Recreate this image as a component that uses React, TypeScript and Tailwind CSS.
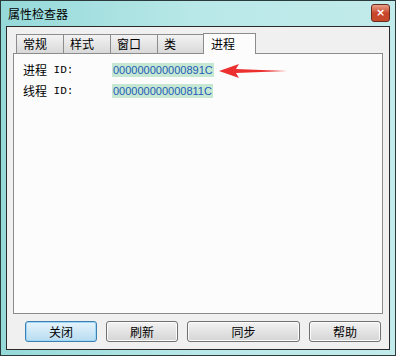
import React from 'react';

const tabs = ['常规', '样式', '窗口', '类'];
const cjk = { fontFamily: '"SimSun", "Noto Sans CJK SC", sans-serif' };
const mono = { fontFamily: '"Liberation Mono", monospace', fontSize: '11px' };
const val = { fontFamily: '"Liberation Sans", Arial, sans-serif', fontSize: '11px' };

function Btn({ label, w, focused }: { label: string; w: string; focused?: boolean }) {
  return (
    <div
      className={`${w} h-[21px] flex items-center justify-center text-[12px] text-black rounded-[3px] border ${
        focused
          ? 'border-[#3c7fb1] bg-gradient-to-b from-[#e5f4fc] to-[#b7dcf1] shadow-[inset_0_0_0_1px_#9fd6f5]'
          : 'border-[#707070] bg-gradient-to-b from-[#f2f2f2] to-[#d5d5d5] shadow-[inset_0_0_0_1px_#fcfcfc]'
      }`}
      style={cjk}
    >
      {label}
    </div>
  );
}

function Row({ label, value }: { label: string; value: string }) {
  return (
    <div className="flex items-center h-[14px] text-[12px] text-black">
      <span className="w-[89px] flex items-center">
        <span style={cjk}>{label}</span>
        <span style={mono}>&nbsp;ID:</span>
      </span>
      <span className="bg-[#c6e8d2] text-[#1f5bb8] px-[1px] leading-[14px]" style={val}>
        {value}
      </span>
    </div>
  );
}

export default function App() {
  return (
    <div className="w-[396px] h-[356px] flex flex-col border border-[#2b3b3b] bg-gradient-to-r from-[#95d9d9] via-[#b9e8e8] to-[#c2ebeb]">
      {/* Title bar */}
      <div className="h-[25px] flex items-center justify-between pl-[7px] pr-[5px]">
        <span className="text-[12px] text-black" style={cjk}>属性检查器</span>
        <div className="w-[19px] h-[18px] mt-[-2px] rounded-[3px] border border-[#6b2a1e] bg-gradient-to-b from-[#e8a08a] via-[#c8452a] to-[#c74a2c] flex items-center justify-center">
          <span className="text-white text-[11px] font-bold leading-none" style={{ fontFamily: '"DejaVu Sans", sans-serif' }}>×</span>
        </div>
      </div>

      {/* Client area */}
      <div className="flex-1 mx-[5px] mb-[5px] border border-[#2a2a2a] bg-[#f0f0f0] flex flex-col">
        {/* Tabs */}
        <div className="flex items-end h-[26px] pl-[9px]">
          {tabs.map((t) => (
            <div
              key={t}
              className="w-[48px] h-[19px] -mr-px border border-[#8c8c8c] border-b-0 bg-gradient-to-b from-[#f3f3f3] to-[#d9d9d9] flex items-center pl-[6px] text-[12px] text-black"
              style={cjk}
            >
              {t}
            </div>
          ))}
          <div
            className="w-[53px] h-[21px] ml-[-1px] border border-[#8c8c8c] border-b-0 bg-[#fcfcfc] flex items-center pl-[7px] text-[12px] text-black relative z-10 mb-[-1px]"
            style={cjk}
          >
            进程
          </div>
        </div>

        {/* Panel */}
        <div className="mx-[6px] h-[261px] border border-[#8c8c8c] bg-[#fcfcfc] relative pt-[9px] pl-[9px] flex flex-col gap-[7px]">
          <Row label="进程" value="000000000000891C" />
          <Row label="线程" value="000000000000811C" />
          {/* red arrow */}
          <svg className="absolute left-[205px] top-[9px]" width="68" height="16" viewBox="0 0 68 16">
            <path d="M0 8 L20 1 L17 6 L68 8 L17 10 L20 15 Z" fill="#ec3030" />
          </svg>
        </div>

        {/* Buttons */}
        <div className="flex items-center gap-[9px] pl-[18px] mt-[7px]">
          <Btn label="关闭" w="w-[72px]" focused />
          <Btn label="刷新" w="w-[72px]" />
          <Btn label="同步" w="w-[113px]" />
          <Btn label="帮助" w="w-[72px]" />
        </div>
      </div>
    </div>
  );
}
